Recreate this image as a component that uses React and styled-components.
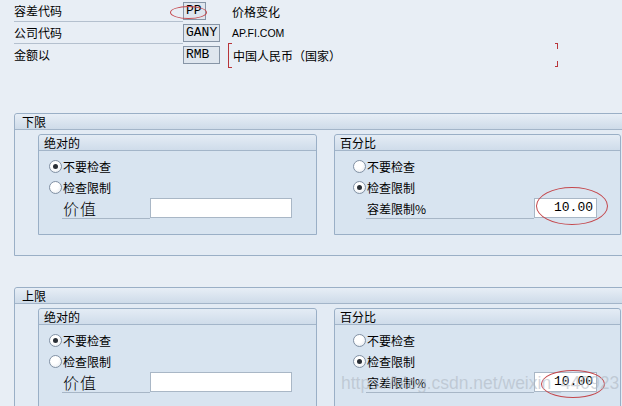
import React from 'react'
import styled, { createGlobalStyle } from 'styled-components'

const GlobalStyle = createGlobalStyle`
  html, body {
    margin: 0;
    padding: 0;
  }
  body {
    background: #e8eef5;
    font-family: "Noto Sans CJK SC", "Liberation Sans", sans-serif;
    font-size: 12px;
    color: #000;
    overflow: hidden;
  }
`

const Screen = styled.div`
  position: relative;
  width: 622px;
  height: 406px;
  overflow: hidden;
  background: #e8eef5;
`

const HeaderForm = styled.div`
  padding-left: 14px;
`

const FormRow = styled.div`
  display: flex;
  align-items: center;
  height: 22px;
`

const RowLabel = styled.div`
  width: 169px;
  height: 100%;
  display: flex;
  align-items: center;
  box-sizing: border-box;
  border-bottom: 1px solid ${(p) => (p.$lined ? '#b4c0ce' : 'transparent')};
`

const FieldCell = styled.div`
  width: 45px;
  display: flex;
  align-items: center;
`

const CodeField = styled.span`
  position: relative;
  display: inline-block;
  box-sizing: border-box;
  width: ${(p) => p.$w}px;
  height: 18px;
  line-height: 16px;
  padding-left: 2px;
  border: 1px solid #8795a6;
  background: #dfe6ee;
  font-family: "Liberation Mono", monospace;
  font-size: 13px;
`

const Desc = styled.div`
  position: relative;
  height: 100%;
  display: flex;
  align-items: center;
  padding-left: ${(p) => (p.$bracketed ? 5 : 4)}px;
  width: ${(p) => (p.$bracketed ? '325px' : 'auto')};
  font-family: ${(p) =>
    p.$latin ? '"Liberation Sans", sans-serif' : '"Noto Sans CJK SC", sans-serif'};
  font-size: ${(p) => (p.$latin ? '10.5px' : '12px')};

  ${(p) =>
    p.$bracketed &&
    `
    &::before {
      content: '';
      position: absolute;
      left: 0;
      top: -1px;
      bottom: -2px;
      width: 3px;
      border: 1px solid #b8353a;
      border-right: none;
    }
    &::after {
      content: '';
      position: absolute;
      right: 0;
      top: -1px;
      bottom: -1px;
      width: 3px;
      border-top: 1px solid #b8353a;
      border-bottom: 1px solid #b8353a;
      background:
        linear-gradient(#b8353a, #b8353a) right top / 1px 5px no-repeat,
        linear-gradient(#b8353a, #b8353a) right bottom / 1px 5px no-repeat;
    }
  `}
`

const Ellipse = styled.span`
  position: absolute;
  left: ${(p) => p.$l}px;
  top: ${(p) => p.$t}px;
  width: ${(p) => p.$w}px;
  height: ${(p) => p.$h}px;
  border: 1px solid #c4474c;
  border-radius: 50%;
  pointer-events: none;
`

const Group = styled.section`
  margin: ${(p) => p.$top}px -10px 0 14px;
  border: 1px solid #9aafc6;
  border-radius: 3px 3px 0 0;
  background: #e3ebf4;
  padding-bottom: 20px;
`

const GroupTitle = styled.div`
  height: 15px;
  line-height: 15px;
  padding-left: 7px;
  background: linear-gradient(#e7eef6, #cedbe9);
  border-bottom: 1px solid #a3b5c9;
  border-radius: 3px 3px 0 0;
`

const Panels = styled.div`
  display: flex;
  gap: 17px;
  padding: 4px 0 0 23px;
`

const Panel = styled.div`
  width: ${(p) => p.$w}px;
  box-sizing: border-box;
  border: 1px solid #9aafc6;
  border-radius: 3px 3px 0 0;
  background: #d8e4f0;
  padding-bottom: 15px;
`

const PanelTitle = styled.div`
  height: 15px;
  line-height: 15px;
  padding-left: 5px;
  background: linear-gradient(#e4ecf5, #cfdcea);
  border-bottom: 1px solid #a3b5c9;
  border-radius: 3px 3px 0 0;
  margin-bottom: 5px;
`

const RadioRow = styled.label`
  display: flex;
  align-items: center;
  height: 21px;
  padding-left: ${(p) => p.$indent}px;
`

const RadioDot = styled.span`
  position: relative;
  width: 13px;
  height: 13px;
  box-sizing: border-box;
  border-radius: 50%;
  border: 1px solid #8291a4;
  background: radial-gradient(circle at 40% 35%, #ffffff 40%, #dfe5ec 100%);
  margin-right: 1px;

  &::after {
    content: '';
    display: ${(p) => (p.$checked ? 'block' : 'none')};
    position: absolute;
    left: 3px;
    top: 3px;
    width: 5px;
    height: 5px;
    border-radius: 50%;
    background: #2a2f36;
  }
`

const ValueRow = styled.div`
  display: flex;
  align-items: stretch;
  height: 21px;
  margin-left: ${(p) => p.$indent}px;
  margin-right: ${(p) => p.$right}px;
`

const ValueLabel = styled.div`
  flex: 1;
  display: flex;
  align-items: center;
  padding-left: 1px;
  border-bottom: 1px solid #a7b6c6;
  font-size: ${(p) => (p.$big ? '16px' : '12px')};
  font-weight: ${(p) => (p.$big ? 300 : 400)};
  letter-spacing: ${(p) => (p.$big ? '1px' : '0')};
`

const ValueInput = styled.div`
  position: relative;
  width: ${(p) => p.$w}px;
  box-sizing: border-box;
  height: 20px;
  border: 1px solid #a9b7c6;
  background: #fff;
  text-align: right;
  padding-right: 3px;
  line-height: 18px;
  font-family: "Liberation Mono", monospace;
  font-size: 13px;
`

const Watermark = styled.div`
  position: absolute;
  left: 341px;
  top: 373px;
  font-family: "Liberation Sans", sans-serif;
  font-size: 17.5px;
  color: rgba(175, 184, 195, 0.6);
  white-space: nowrap;
  pointer-events: none;
`

const Radio = ({ checked, indent, children }) => (
  <RadioRow $indent={indent}>
    <RadioDot $checked={checked} />
    {children}
  </RadioRow>
)

const LimitGroup = ({ title, top, ellipse }) => (
  <Group $top={top}>
    <GroupTitle>{title}</GroupTitle>
    <Panels>
      <Panel $w={279}>
        <PanelTitle>绝对的</PanelTitle>
        <Radio checked indent={10}>不要检查</Radio>
        <Radio indent={10}>检查限制</Radio>
        <ValueRow $indent={23} $right={24}>
          <ValueLabel $big>价值</ValueLabel>
          <ValueInput $w={142} />
        </ValueRow>
      </Panel>
      <Panel $w={287}>
        <PanelTitle>百分比</PanelTitle>
        <Radio indent={18}>不要检查</Radio>
        <Radio checked indent={18}>检查限制</Radio>
        <ValueRow $indent={31} $right={23}>
          <ValueLabel>容差限制%</ValueLabel>
          <ValueInput $w={63}>
            10.00
            <Ellipse $l={ellipse.l} $t={ellipse.t} $w={ellipse.w} $h={ellipse.h} />
          </ValueInput>
        </ValueRow>
      </Panel>
    </Panels>
  </Group>
)

export default function App() {
  return (
    <Screen>
      <GlobalStyle />
      <HeaderForm>
        <FormRow>
          <RowLabel $lined>容差代码</RowLabel>
          <FieldCell>
            <CodeField $w={23}>
              PP
              <Ellipse $l={-14} $t={3} $w={35} $h={11} />
            </CodeField>
          </FieldCell>
          <Desc>价格变化</Desc>
        </FormRow>
        <FormRow>
          <RowLabel $lined>公司代码</RowLabel>
          <FieldCell>
            <CodeField $w={37}>GANY</CodeField>
          </FieldCell>
          <Desc $latin>AP.FI.COM</Desc>
        </FormRow>
        <FormRow>
          <RowLabel>金额以</RowLabel>
          <FieldCell>
            <CodeField $w={37}>RMB</CodeField>
          </FieldCell>
          <Desc $bracketed>中国人民币（国家）</Desc>
        </FormRow>
      </HeaderForm>

      <LimitGroup title="下限" top={47} ellipse={{ l: 1, t: -12, w: 70, h: 36 }} />
      <LimitGroup title="上限" top={31} ellipse={{ l: 6, t: -3, w: 62, h: 26 }} />

      <Watermark>https://blog.csdn.net/weixin_440923</Watermark>
    </Screen>
  )
}
